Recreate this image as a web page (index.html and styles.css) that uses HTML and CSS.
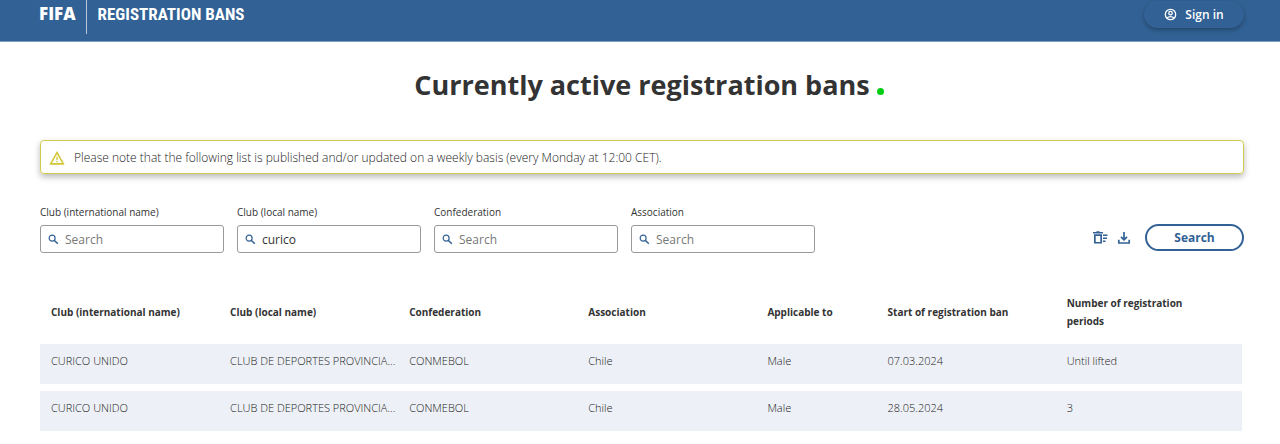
FILE: index.html
```html
<!DOCTYPE html>
<html lang="en">
<head>
<meta charset="utf-8">
<title>FIFA Registration Bans</title>
<link rel="stylesheet" href="styles.css">
</head>
<body>
<header class="topbar">
  <div class="brand">
    <span class="logo">FIFA</span>
    <span class="product">REGISTRATION BANS</span>
  </div>
  <button class="signin" type="button">
    <svg class="icon-user" viewBox="0 0 24 24" fill="none" stroke="currentColor" stroke-width="2.4" aria-hidden="true"><circle cx="12" cy="12" r="9.6"/><circle cx="12" cy="9.5" r="3.2"/><path d="M5.5 18.5c3.5-3.6 9.500-3.600 13 0"/></svg>
    Sign in
  </button>
</header>
<main class="content">
  <h1 class="title">Currently active registration bans<span class="dot"></span></h1>
  <div class="notice" role="note">
    <svg class="icon-warning" viewBox="0 0 24 24" aria-hidden="true"><path fill="currentColor" fill-rule="evenodd" d="M12 1.500 0.500 22h23zM12 6.300 19.500 19.500h-15zM11 10.300h2v4.800h-2zM11 16.200h2v2h-2z"/></svg>
    <p class="notice-text">Please note that the following list is published and/or updated on a weekly basis (every Monday at 12:00 CET).</p>
  </div>
  <form class="filters">
    <div class="field">
      <label class="label" for="club-int">Club (international name)</label>
      <div class="box"><svg class="icon-search" viewBox="0 0 24 24" aria-hidden="true"><use href="#magnifier"/></svg><input class="input" id="club-int" type="text" placeholder="Search"></div>
    </div>
    <div class="field">
      <label class="label" for="club-local">Club (local name)</label>
      <div class="box"><svg class="icon-search" viewBox="0 0 24 24" aria-hidden="true"><use href="#magnifier"/></svg><input class="input" id="club-local" type="text" placeholder="Search" value="curico"></div>
    </div>
    <div class="field">
      <label class="label" for="confederation">Confederation</label>
      <div class="box"><svg class="icon-search" viewBox="0 0 24 24" aria-hidden="true"><use href="#magnifier"/></svg><input class="input" id="confederation" type="text" placeholder="Search"></div>
    </div>
    <div class="field">
      <label class="label" for="association">Association</label>
      <div class="box"><svg class="icon-search" viewBox="0 0 24 24" aria-hidden="true"><symbol id="magnifier" viewBox="0 0 24 24"><circle cx="9" cy="9" r="6.500" fill="none" stroke="currentColor" stroke-width="2.600"/><path d="m14 14 7.500 7.500" stroke="currentColor" stroke-width="3.200"/></symbol><use href="#magnifier"/></svg><input class="input" id="association" type="text" placeholder="Search"></div>
    </div>
    <div class="actions">
      <button class="icon-button" type="button" aria-label="Clear filters">
        <svg class="icon-action" viewBox="0 0 16 16" aria-hidden="true"><path fill="currentColor" fill-rule="evenodd" d="M1 3.500V2h3l.8-.8h2.400l.8.8h3v1.500zM2 4.300h8V13.500H2zM3.700 5.900v6h4.600v-6zM11 4.500h4.500V6H11zM11 7.500h4V9h-4zM11 10.500h2.500V12H11z"/></svg>
      </button>
      <button class="icon-button" type="button" aria-label="Download">
        <svg class="icon-action" viewBox="0 0 16 16" fill="none" stroke="currentColor" stroke-width="1.700" aria-hidden="true"><path d="M8 2v7.500M5 6.800 8 9.800l3-3M2.800 9.800v3.200h10.400V9.800"/></svg>
      </button>
      <button class="search" type="submit">Search</button>
    </div>
  </form>
  <table class="bans">
    <colgroup><col class="col"><col class="col"><col class="col"><col class="col"><col class="col-small"><col class="col"><col></colgroup>
    <thead>
      <tr><th>Club (international name)</th><th>Club (local name)</th><th>Confederation</th><th>Association</th><th>Applicable to</th><th>Start of registration ban</th><th class="wrap">Number of registration periods</th></tr>
    </thead>
    <tbody>
      <tr><td>CURICO UNIDO</td><td>CLUB DE DEPORTES PROVINCIA...</td><td>CONMEBOL</td><td>Chile</td><td>Male</td><td>07.03.2024</td><td>Until lifted</td></tr>
      <tr><td>CURICO UNIDO</td><td>CLUB DE DEPORTES PROVINCIA...</td><td>CONMEBOL</td><td>Chile</td><td>Male</td><td>28.05.2024</td><td>3</td></tr>
    </tbody>
  </table>
</main>
</body>
</html>
```
FILE: styles.css
```css
* { box-sizing: border-box; }
body { margin: 0; background: #fff; color: #333; font-family: "Open Sans", sans-serif; }
button, input { font-family: inherit; }

.topbar { display: flex; justify-content: space-between; align-items: flex-start; height: 42px; padding: 0 36px 0 39px; background: #326295; border-bottom: 1px solid #7f9dbd; color: #fff; }
.brand { display: flex; line-height: 28px; }
.logo { padding-right: 10px; height: 34px; border-right: 1px solid #b9c9dc; font-size: 17px; font-weight: 800; }
.product { padding-left: 11px; font-family: "Liberation Sans Narrow", "Roboto Condensed", "Liberation Sans", sans-serif; font-size: 17px; font-weight: 700; }
.signin { display: flex; align-items: center; justify-content: center; gap: 8px; width: 100px; height: 27px; margin-top: 1px; padding: 0; border: 0; border-radius: 14px; background: #326295; color: #fff; font-size: 12px; font-weight: 600; box-shadow: 0 2px 5px rgba(0, 0, 0, .3); }
.icon-user { width: 13px; height: 13px; }

.content { padding: 0 36px 12px 40px; }
.title { display: flex; justify-content: center; align-items: baseline; gap: 7px; margin: 24px 0 36px 14px; font-size: 27px; line-height: 38px; font-weight: 700; }
.dot { width: 7px; height: 7px; border-radius: 50%; background: #0c1; }

.notice { display: flex; align-items: center; gap: 9px; height: 34px; padding: 1px 8px 0; border: 1px solid #d3cb4b; border-radius: 4px; box-shadow: 0 3px 6px rgba(0, 0, 0, .28); }
.icon-warning { flex: none; width: 16px; height: 16px; color: #d3c634; }
.notice-text { margin: 0; color: #222; font-size: 12px; line-height: 18px; font-weight: 300; }

.filters { display: flex; align-items: flex-end; gap: 13px; margin-top: 30px; }
.field { flex: 0 1 184px; min-width: 0; }
.label { display: block; margin-bottom: 5px; font-size: 10px; line-height: 16px; }
.box { display: flex; align-items: center; gap: 6px; height: 28px; padding: 0 7px; border: 1px solid #999; border-radius: 3px; }
.icon-search { flex: none; width: 11px; height: 11px; color: #326295; }
.input { flex: 1; min-width: 0; padding: 0; border: 0; outline: 0; background: transparent; color: #333; font-size: 12px; }
.input::placeholder { color: #777; opacity: 1; }
.actions { display: flex; align-items: center; gap: 8px; margin-left: auto; padding-bottom: 2px; }
.icon-button { display: flex; padding: 0; border: 0; background: none; color: #326295; }
.icon-action { width: 16px; height: 16px; }
.search { width: 99px; height: 27px; margin-left: 5px; padding: 0; border: 2px solid #326295; border-radius: 14px; background: #fff; color: #326295; font-size: 12px; font-weight: 700; }

.bans { width: calc(100% - 2px); margin-top: 26px; table-layout: fixed; border-collapse: separate; border-spacing: 0; }
.col { width: 14.9%; }
.col-small { width: 10%; }
.bans th, .bans td { padding: 0 11px; text-align: left; white-space: nowrap; }
.bans th { height: 65px; font-size: 10px; line-height: 18px; font-weight: 700; }
.bans .wrap { padding-right: 40px; white-space: normal; }
.bans td { height: 40px; padding-bottom: 6px; background: #edf0f6; color: #222; font-size: 11px; line-height: 16px; font-weight: 300; }
.bans tbody tr + tr td { height: 47px; border-top: 7px solid #fff; }
```
